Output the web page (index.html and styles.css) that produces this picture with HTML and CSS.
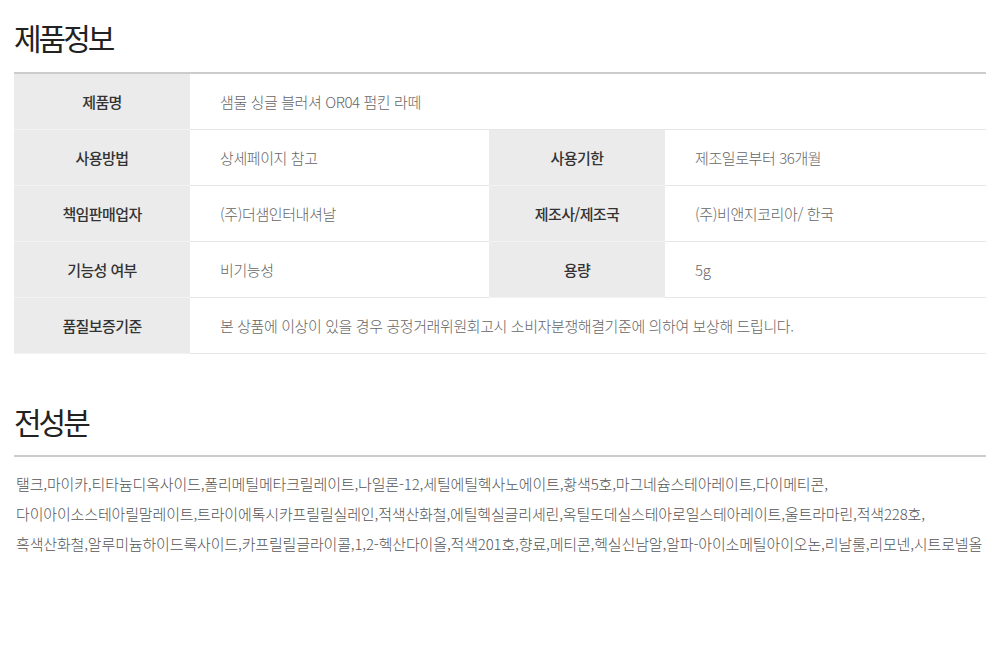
FILE: index.html
```html
<!DOCTYPE html>
<html lang="ko">
    <head>
        <meta charset="UTF-8" />
        <meta name="viewport" content="width=device-width, initial-scale=1.0" />
        <title>제품정보</title>

        <link rel="stylesheet" href="styles.css">
    </head>
    <body>
        <div class="detail_container">
            <h2 class="section_title">제품정보</h2>
            <table class="info_table">
                <colgroup>
                    <col class="col_head" />
                    <col class="col_value" />
                    <col class="col_head" />
                    <col />
                </colgroup>
                <tr>
                    <th>제품명</th>
                    <td colspan="3">샘물 싱글 블러셔 OR04 펌킨 라떼</td>
                </tr>
                <tr>
                    <th>사용방법</th>
                    <td>상세페이지 참고</td>
                    <th>사용기한</th>
                    <td>제조일로부터 36개월</td>
                </tr>
                <tr>
                    <th>책임판매업자</th>
                    <td>(주)더샘인터내셔날</td>
                    <th>제조사/제조국</th>
                    <td>(주)비앤지코리아/ 한국</td>
                </tr>
                <tr>
                    <th>기능성 여부</th>
                    <td>비기능성</td>
                    <th>용량</th>
                    <td>5g</td>
                </tr>
                <tr>
                    <th>품질보증기준</th>
                    <td colspan="3">본 상품에 이상이 있을 경우 공정거래위원회고시 소비자분쟁해결기준에 의하여 보상해 드립니다.</td>
                </tr>
            </table>

            <h2 class="section_title second">전성분</h2>
            <div class="ingredients">
                <p>탤크,마이카,티타늄디옥사이드,폴리메틸메타크릴레이트,나일론-12,세틸에틸헥사노에이트,황색5호,마그네슘스테아레이트,다이메티콘,</p>
                <p>다이아이소스테아릴말레이트,트라이에톡시카프릴릴실레인,적색산화철,에틸헥실글리세린,옥틸도데실스테아로일스테아레이트,울트라마린,적색228호,</p>
                <p>흑색산화철,알루미늄하이드록사이드,카프릴릴글라이콜,1,2-헥산다이올,적색201호,향료,메티콘,헥실신남알,알파-아이소메틸아이오논,리날룰,리모넨,시트로넬올</p>
            </div>
        </div>
    </body>
</html>
```

FILE: styles.css
```css
body {
    margin: 0;
    background-color: #ffffff;
    font-family: "Noto Sans CJK KR", "Noto Sans", sans-serif;
}

.detail_container {
    padding: 17px 14px 0;
}

.section_title {
    margin: 0 0 15px;
    font-size: 30px;
    line-height: 40px;
    font-weight: 400;
    letter-spacing: -3px;
    color: #222222;
}

.section_title.second {
    margin-top: 47px;
    margin-bottom: 14px;
}

.info_table {
    width: 100%;
    border-collapse: collapse;
    table-layout: fixed;
    border-top: 2px solid #cccccc;
}

.col_head {
    width: 176px;
}

.col_value {
    width: 299px;
}

.info_table th,
.info_table td {
    height: 55px;
    padding: 0;
    font-size: 15px;
    line-height: 20px;
    border-bottom: 1px solid #e6e6e6;
}

.info_table th {
    background-color: #ebebeb;
    color: #333333;
    font-weight: 500;
    letter-spacing: -0.6px;
    text-align: center;
    border-bottom-color: #f3f3f3;
}

.info_table td {
    padding-left: 30px;
    color: #666666;
    font-weight: 300;
    letter-spacing: -0.4px;
    text-align: left;
}

.ingredients {
    border-top: 2px solid #cccccc;
    padding: 12px 2px 0;
}

.ingredients p {
    margin: 0;
    font-size: 15px;
    line-height: 30px;
    letter-spacing: -0.15px;
    color: #555555;
    font-weight: 300;
    white-space: nowrap;
}
```
